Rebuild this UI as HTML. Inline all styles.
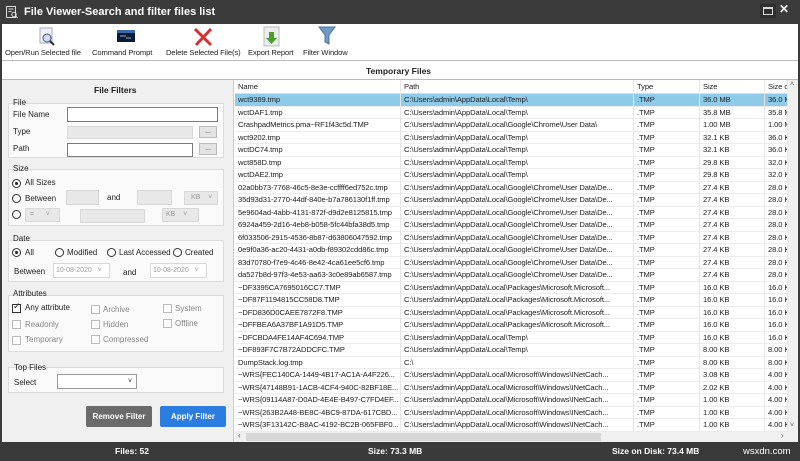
<!DOCTYPE html>
<html><head><meta charset="utf-8"><style>
*{margin:0;padding:0;box-sizing:border-box}
body{width:800px;height:461px;overflow:hidden;background:#fff;font-family:"Liberation Sans",sans-serif;font-size:8px;color:#222;position:relative}
.a{position:absolute;white-space:nowrap}
.title{left:0;top:0;width:800px;height:24px;background:#3b3b3b;color:#fff;font-weight:bold;font-size:11px;line-height:25px;padding-left:24px}
.tb{top:24px;left:2px;width:796px;height:36px;background:#fff}
.lbl{top:48px;font-size:7.6px;color:#222;letter-spacing:-0.1px}
.lp{left:2px;top:80px;width:232px;height:362px;background:#f0f0f0;border-right:1px solid #ccc}
.gb{border:1px solid #dcdcdc;background:#fafafa}
.in{background:#fff;border:1px solid #7a7a7a}
.dis{background:#e8e8e8;border:1px solid #d8d8d8}
.btn{background:#e4e4e4;border:1px solid #bbb;font-size:7px;text-align:center;line-height:10px}
.rad{width:9px;height:9px;border:1px solid #333;border-radius:50%;background:#fff}
.rad.on::after{content:"";position:absolute;left:2px;top:2px;width:3px;height:3px;border-radius:50%;background:#222}
.cb{width:9px;height:9px;border:1px solid #bbb;background:#fff}
.gray{color:#888}
.row{position:absolute;left:235px;width:553px;height:12.5px;border-bottom:1px solid #ececec;font-size:7.6px;line-height:12px;letter-spacing:-0.1px}
.row span{position:absolute;top:0;height:12px;overflow:hidden;white-space:nowrap;padding-left:3px;border-right:1px solid #e6e6e6}
.c1{left:0;width:166px}.c2{left:166px;width:233px}.c3{left:399px;width:66px}.c4{left:465px;width:65px}.c5{left:530px;width:23px}
.row.s{background:#8ecbe8}
.sb{background:#3a3a3a;left:0;top:442px;width:800px;height:19px}
</style></head><body>
<div class="a title">File Viewer-Search and filter files list</div>
<svg class="a" style="left:5px;top:5px" width="14" height="14" viewBox="0 0 14 14"><rect x="1.5" y="1.5" width="9" height="11" fill="none" stroke="#ddd"/><path d="M3.5 4h5M3.5 6.5h3" stroke="#ddd"/><circle cx="9" cy="9.5" r="2.2" fill="none" stroke="#ddd"/><path d="M10.6 11l2 2" stroke="#ddd"/></svg>
<div class="a" style="left:760px;top:4px;width:16px;height:14px;background:#2e2e2e"></div>
<div class="a" style="left:763px;top:7px;width:10px;height:8px;border:1px solid #ddd;border-top-width:2px"></div>
<div class="a" style="left:779px;top:2px;color:#eee;font-size:12px;font-weight:bold">✕</div>
<div class="a" style="left:0;top:24px;width:2px;height:418px;background:#3b3b3b"></div>
<div class="a" style="left:798px;top:24px;width:2px;height:418px;background:#3b3b3b"></div>
<div class="a tb"></div>
<svg class="a" style="left:37px;top:27px" width="20" height="20"><rect x="3" y="1" width="12" height="15" fill="#eef2f8" stroke="#aab"/><circle cx="10" cy="11" r="4" fill="#cde" stroke="#557"/><path d="M13 14l4 4" stroke="#333" stroke-width="2"/></svg>
<svg class="a" style="left:117px;top:30px" width="18" height="14"><rect x="0" y="0" width="18" height="12" fill="#0a1a3a"/><rect x="0" y="0" width="18" height="3" fill="#3a6aa8"/><path d="M3 6h6M9 8h5" stroke="#9ab"/></svg>
<svg class="a" style="left:192px;top:26px" width="22" height="22"><path d="M3 3L19 19M19 3L4 19" stroke="#d63030" stroke-width="3"/></svg>
<svg class="a" style="left:262px;top:26px" width="20" height="22"><rect x="2" y="1" width="15" height="19" fill="#eee" stroke="#bbb"/><path d="M7 6h5v6h3l-5.5 6L4 12h3z" fill="#4aa02a"/></svg>
<svg class="a" style="left:318px;top:26px" width="18" height="20"><path d="M1 1h16l-6 8v9l-4-2V9z" fill="#6d9bc6" stroke="#4a76a0"/></svg>
<div class="a lbl" style="left:5px">Open/Run Selected file</div>
<div class="a lbl" style="left:92px">Command Prompt</div>
<div class="a lbl" style="left:166px">Delete Selected File(s)</div>
<div class="a lbl" style="left:248px">Export Report</div>
<div class="a lbl" style="left:303px">Filter Window</div>
<div class="a" style="left:2px;top:60px;width:796px;height:20px;border-top:1px solid #bbb;border-bottom:1px solid #bbb;background:#fff"></div>
<div class="a" style="left:366px;top:66px;font-weight:bold;font-size:8.5px">Temporary Files</div>
<div class="a lp"></div>
<div class="a" style="left:94px;top:85px;font-weight:bold;font-size:8.5px">File Filters</div>
<div class="a gb" style="left:8px;top:103px;width:216px;height:55px"></div>
<div class="a" style="left:13px;top:98px">File</div>
<div class="a" style="left:13px;top:110px">File Name</div>
<div class="a in" style="left:67px;top:107px;width:151px;height:15px"></div>
<div class="a" style="left:13px;top:127px">Type</div>
<div class="a dis" style="left:67px;top:126px;width:126px;height:13px"></div>
<div class="a btn" style="left:199px;top:126px;width:18px;height:12px">...</div>
<div class="a" style="left:13px;top:144px">Path</div>
<div class="a in" style="left:67px;top:143px;width:126px;height:14px"></div>
<div class="a btn" style="left:199px;top:143px;width:18px;height:12px">...</div>
<div class="a gb" style="left:8px;top:169px;width:216px;height:57px"></div>
<div class="a" style="left:13px;top:164px">Size</div>
<div class="a rad on" style="left:12px;top:179px"></div><div class="a" style="left:25px;top:178px">All Sizes</div>
<div class="a rad" style="left:12px;top:194px"></div><div class="a" style="left:25px;top:194px">Between</div>
<div class="a dis" style="left:66px;top:190px;width:33px;height:15px"></div>
<div class="a" style="left:107px;top:193px">and</div>
<div class="a dis" style="left:137px;top:190px;width:35px;height:15px"></div>
<div class="a dis" style="left:184px;top:191px;width:34px;height:14px;color:#999;font-size:7px;padding:2px 0 0 6px">KB &nbsp;&nbsp;&nbsp;˅</div>
<div class="a rad" style="left:12px;top:210px"></div>
<div class="a dis" style="left:25px;top:208px;width:35px;height:14px;color:#999;font-size:7px;padding:2px 0 0 4px">= &nbsp;&nbsp;&nbsp;&nbsp;&nbsp;˅</div>
<div class="a dis" style="left:80px;top:209px;width:65px;height:14px"></div>
<div class="a dis" style="left:162px;top:208px;width:37px;height:14px;color:#999;font-size:7px;padding:2px 0 0 3px">KB &nbsp;&nbsp;&nbsp;˅</div>
<div class="a gb" style="left:8px;top:240px;width:216px;height:42px"></div>
<div class="a" style="left:13px;top:234px">Date</div>
<div class="a rad on" style="left:12px;top:248px"></div><div class="a" style="left:25px;top:248px">All</div>
<div class="a rad" style="left:55px;top:248px"></div><div class="a" style="left:67px;top:248px">Modified</div>
<div class="a rad" style="left:107px;top:248px"></div><div class="a" style="left:119px;top:248px">Last Accessed</div>
<div class="a rad" style="left:173px;top:248px"></div><div class="a" style="left:185px;top:248px">Created</div>
<div class="a" style="left:14px;top:267px">Between</div>
<div class="a dis" style="left:53px;top:263px;width:57px;height:15px;background:#fff;color:#999;font-size:7px;padding:3px 0 0 2px">10-08-2020 &nbsp;&nbsp;˅</div>
<div class="a" style="left:123px;top:268px">and</div>
<div class="a dis" style="left:150px;top:263px;width:57px;height:15px;background:#fff;color:#999;font-size:7px;padding:3px 0 0 2px">10-08-2020 &nbsp;&nbsp;˅</div>
<div class="a gb" style="left:8px;top:295px;width:216px;height:57px"></div>
<div class="a" style="left:13px;top:289px">Attributes</div>
<div class="a cb" style="left:12px;top:304px;border-color:#333"></div><div class="a" style="left:13px;top:301px;font-size:9px">✓</div>
<div class="a" style="left:25px;top:303px">Any attribute</div>
<div class="a cb" style="left:91px;top:305px"></div><div class="a gray" style="left:103px;top:305px">Archive</div>
<div class="a cb" style="left:163px;top:304px"></div><div class="a gray" style="left:175px;top:304px">System</div>
<div class="a cb" style="left:12px;top:320px"></div><div class="a gray" style="left:25px;top:320px">Readonly</div>
<div class="a cb" style="left:91px;top:320px"></div><div class="a gray" style="left:103px;top:320px">Hidden</div>
<div class="a cb" style="left:163px;top:319px"></div><div class="a gray" style="left:175px;top:319px">Offline</div>
<div class="a cb" style="left:12px;top:336px"></div><div class="a gray" style="left:25px;top:335px">Temporary</div>
<div class="a cb" style="left:91px;top:335px"></div><div class="a gray" style="left:103px;top:335px">Compressed</div>
<div class="a gb" style="left:8px;top:367px;width:216px;height:26px"></div>
<div class="a" style="left:14px;top:363px">Top Files</div>
<div class="a" style="left:14px;top:378px">Select</div>
<div class="a in" style="left:57px;top:374px;width:80px;height:15px;font-size:7px;padding:3px 0 0 70px;border-color:#999">˅</div>
<div class="a" style="left:86px;top:406px;width:66px;height:21px;background:#6a6a6a;border-radius:2px;color:#fff;font-weight:bold;font-size:8px;text-align:center;line-height:21px">Remove Filter</div>
<div class="a" style="left:160px;top:406px;width:66px;height:21px;background:#2b7de0;border-radius:2px;color:#fff;font-weight:bold;font-size:8px;text-align:center;line-height:21px">Apply Filter</div>

<div class="row" style="top:80px;height:14px;line-height:13px;border-bottom-color:#ddd"><span class="c1">Name</span><span class="c2">Path</span><span class="c3">Type</span><span class="c4">Size</span><span class="c5">Size o</span></div>
<div class="row s" style="top:94px"><span class="c1">wct9389.tmp</span><span class="c2">C:\Users\admin\AppData\Local\Temp\</span><span class="c3">.TMP</span><span class="c4">36.0 MB</span><span class="c5">36.0 M</span></div>
<div class="row" style="top:106.5px"><span class="c1">wctDAF1.tmp</span><span class="c2">C:\Users\admin\AppData\Local\Temp\</span><span class="c3">.TMP</span><span class="c4">35.8 MB</span><span class="c5">35.8 M</span></div>
<div class="row" style="top:119px"><span class="c1">CrashpadMetrics.pma~RF1f43c5d.TMP</span><span class="c2">C:\Users\admin\AppData\Local\Google\Chrome\User Data\</span><span class="c3">.TMP</span><span class="c4">1.00 MB</span><span class="c5">1.00 M</span></div>
<div class="row" style="top:131.5px"><span class="c1">wct9202.tmp</span><span class="c2">C:\Users\admin\AppData\Local\Temp\</span><span class="c3">.TMP</span><span class="c4">32.1 KB</span><span class="c5">36.0 K</span></div>
<div class="row" style="top:144px"><span class="c1">wctDC74.tmp</span><span class="c2">C:\Users\admin\AppData\Local\Temp\</span><span class="c3">.TMP</span><span class="c4">32.1 KB</span><span class="c5">36.0 K</span></div>
<div class="row" style="top:156.5px"><span class="c1">wct858D.tmp</span><span class="c2">C:\Users\admin\AppData\Local\Temp\</span><span class="c3">.TMP</span><span class="c4">29.8 KB</span><span class="c5">32.0 K</span></div>
<div class="row" style="top:169px"><span class="c1">wctDAE2.tmp</span><span class="c2">C:\Users\admin\AppData\Local\Temp\</span><span class="c3">.TMP</span><span class="c4">29.8 KB</span><span class="c5">32.0 K</span></div>
<div class="row" style="top:181.5px"><span class="c1">02a0bb73-7768-46c5-8e3e-ccffff6ed752c.tmp</span><span class="c2">C:\Users\admin\AppData\Local\Google\Chrome\User Data\De...</span><span class="c3">.TMP</span><span class="c4">27.4 KB</span><span class="c5">28.0 K</span></div>
<div class="row" style="top:194px"><span class="c1">35d93d31-2770-44df-840e-b7a786130f1ff.tmp</span><span class="c2">C:\Users\admin\AppData\Local\Google\Chrome\User Data\De...</span><span class="c3">.TMP</span><span class="c4">27.4 KB</span><span class="c5">28.0 K</span></div>
<div class="row" style="top:206.5px"><span class="c1">5e9604ad-4abb-4131-872f-d9d2e8125815.tmp</span><span class="c2">C:\Users\admin\AppData\Local\Google\Chrome\User Data\De...</span><span class="c3">.TMP</span><span class="c4">27.4 KB</span><span class="c5">28.0 K</span></div>
<div class="row" style="top:219px"><span class="c1">6924a459-2d16-4eb8-b058-5fc44bfa38d5.tmp</span><span class="c2">C:\Users\admin\AppData\Local\Google\Chrome\User Data\De...</span><span class="c3">.TMP</span><span class="c4">27.4 KB</span><span class="c5">28.0 K</span></div>
<div class="row" style="top:231.5px"><span class="c1">6f033506-2915-4536-8b87-d63806047592.tmp</span><span class="c2">C:\Users\admin\AppData\Local\Google\Chrome\User Data\De...</span><span class="c3">.TMP</span><span class="c4">27.4 KB</span><span class="c5">28.0 K</span></div>
<div class="row" style="top:244px"><span class="c1">0e9f0a36-ac20-4431-a0db-f89302cdd86c.tmp</span><span class="c2">C:\Users\admin\AppData\Local\Google\Chrome\User Data\De...</span><span class="c3">.TMP</span><span class="c4">27.4 KB</span><span class="c5">28.0 K</span></div>
<div class="row" style="top:256.5px"><span class="c1">83d70780-f7e9-4c46-8e42-4ca61ee5cf6.tmp</span><span class="c2">C:\Users\admin\AppData\Local\Google\Chrome\User Data\De...</span><span class="c3">.TMP</span><span class="c4">27.4 KB</span><span class="c5">28.0 K</span></div>
<div class="row" style="top:269px"><span class="c1">da527b8d-97f3-4e53-aa63-3c0e89ab6587.tmp</span><span class="c2">C:\Users\admin\AppData\Local\Google\Chrome\User Data\De...</span><span class="c3">.TMP</span><span class="c4">27.4 KB</span><span class="c5">28.0 K</span></div>
<div class="row" style="top:281.5px"><span class="c1">~DF3395CA7695016CC7.TMP</span><span class="c2">C:\Users\admin\AppData\Local\Packages\Microsoft.Microsoft...</span><span class="c3">.TMP</span><span class="c4">16.0 KB</span><span class="c5">16.0 K</span></div>
<div class="row" style="top:294px"><span class="c1">~DF87F1194815CC58D8.TMP</span><span class="c2">C:\Users\admin\AppData\Local\Packages\Microsoft.Microsoft...</span><span class="c3">.TMP</span><span class="c4">16.0 KB</span><span class="c5">16.0 K</span></div>
<div class="row" style="top:306.5px"><span class="c1">~DFD836D0CAEE7872F8.TMP</span><span class="c2">C:\Users\admin\AppData\Local\Packages\Microsoft.Microsoft...</span><span class="c3">.TMP</span><span class="c4">16.0 KB</span><span class="c5">16.0 K</span></div>
<div class="row" style="top:319px"><span class="c1">~DFFBEA6A37BF1A91D5.TMP</span><span class="c2">C:\Users\admin\AppData\Local\Packages\Microsoft.Microsoft...</span><span class="c3">.TMP</span><span class="c4">16.0 KB</span><span class="c5">16.0 K</span></div>
<div class="row" style="top:331.5px"><span class="c1">~DFCBDA4FE14AF4C694.TMP</span><span class="c2">C:\Users\admin\AppData\Local\Temp\</span><span class="c3">.TMP</span><span class="c4">16.0 KB</span><span class="c5">16.0 K</span></div>
<div class="row" style="top:344px"><span class="c1">~DF893F7C7B72ADDCFC.TMP</span><span class="c2">C:\Users\admin\AppData\Local\Temp\</span><span class="c3">.TMP</span><span class="c4">8.00 KB</span><span class="c5">8.00 K</span></div>
<div class="row" style="top:356.5px"><span class="c1">DumpStack.log.tmp</span><span class="c2">C:\</span><span class="c3">.TMP</span><span class="c4">8.00 KB</span><span class="c5">8.00 K</span></div>
<div class="row" style="top:369px"><span class="c1">~WRS{FEC140CA-1449-4B17-AC1A-A4F226...</span><span class="c2">C:\Users\admin\AppData\Local\Microsoft\Windows\INetCach...</span><span class="c3">.TMP</span><span class="c4">3.08 KB</span><span class="c5">4.00 K</span></div>
<div class="row" style="top:381.5px"><span class="c1">~WRS{47148B91-1ACB-4CF4-940C-82BF18E...</span><span class="c2">C:\Users\admin\AppData\Local\Microsoft\Windows\INetCach...</span><span class="c3">.TMP</span><span class="c4">2.02 KB</span><span class="c5">4.00 K</span></div>
<div class="row" style="top:394px"><span class="c1">~WRS{09114A87-D0AD-4E4E-B497-C7FD4EF...</span><span class="c2">C:\Users\admin\AppData\Local\Microsoft\Windows\INetCach...</span><span class="c3">.TMP</span><span class="c4">1.00 KB</span><span class="c5">4.00 K</span></div>
<div class="row" style="top:406.5px"><span class="c1">~WRS{263B2A48-BE8C-4BC9-87DA-617CBD...</span><span class="c2">C:\Users\admin\AppData\Local\Microsoft\Windows\INetCach...</span><span class="c3">.TMP</span><span class="c4">1.00 KB</span><span class="c5">4.00 K</span></div>
<div class="row" style="top:419px"><span class="c1">~WRS{3F13142C-B8AC-4192-BC2B-065FBF0...</span><span class="c2">C:\Users\admin\AppData\Local\Microsoft\Windows\INetCach...</span><span class="c3">.TMP</span><span class="c4">1.00 KB</span><span class="c5">4.00 K</span></div>

<div class="a" style="left:788px;top:80px;width:10px;height:352px;background:#f0f0f0"></div>
<div class="a" style="left:790px;top:81px;font-size:7px;color:#555">˄</div>
<div class="a" style="left:790px;top:422px;font-size:7px;color:#555">˅</div>
<div class="a" style="left:235px;top:432px;width:563px;height:10px;background:#f0f0f0"></div>
<div class="a" style="left:246px;top:433px;width:355px;height:8px;background:#d6d6d6"></div>
<div class="a" style="left:238px;top:431px;font-size:8px;color:#555">‹</div>
<div class="a" style="left:781px;top:431px;font-size:8px;color:#555">›</div>
<div class="a sb"></div>
<div class="a" style="left:115px;top:442px;color:#fff;font-weight:bold;font-size:8.5px;line-height:19px">Files: 52</div>
<div class="a" style="left:368px;top:442px;color:#fff;font-weight:bold;font-size:8.5px;line-height:19px">Size: 73.3 MB</div>
<div class="a" style="left:612px;top:442px;color:#fff;font-weight:bold;font-size:8.5px;line-height:19px">Size on Disk: 73.4 MB</div>
<div class="a" style="left:743px;top:442px;color:#fff;font-size:9.5px;line-height:19px">wsxdn.com</div>
</body></html>
